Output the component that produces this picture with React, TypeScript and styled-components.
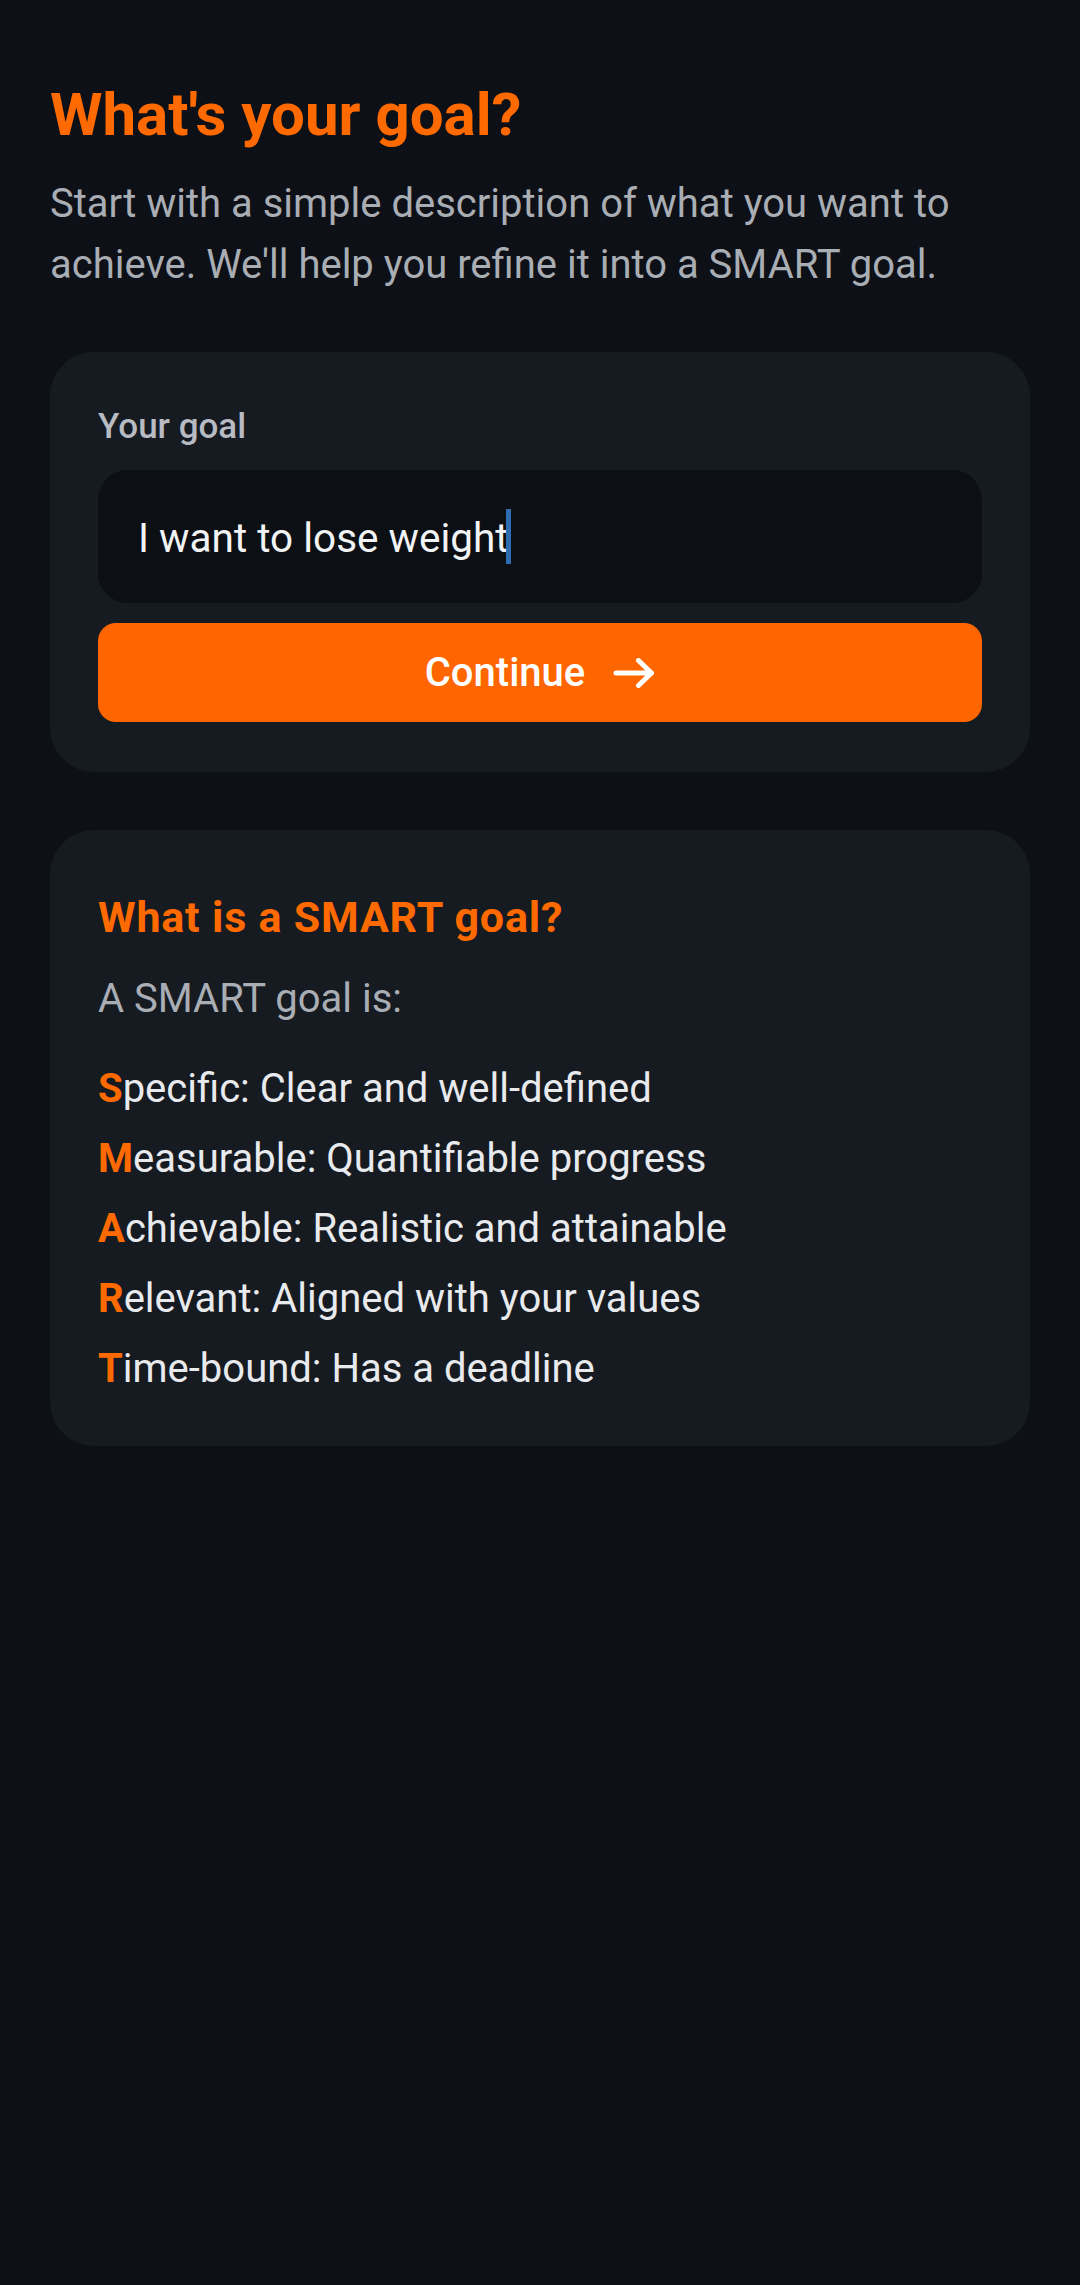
import React from "react";
import styled, { createGlobalStyle } from "styled-components";

const ORANGE = "#ff6600";

const GlobalStyle = createGlobalStyle`
  html, body {
    margin: 0;
    padding: 0;
    background: #0d1016;
  }
  body {
    font-family: Roboto, "Noto Sans", "Liberation Sans", sans-serif;
    -webkit-font-smoothing: antialiased;
  }
  * {
    box-sizing: border-box;
  }
`;

const Page = styled.main`
  min-height: 2285px;
  background: #0d1016;
  padding: 78px 50px 0;
  display: flex;
  flex-direction: column;
`;

const Title = styled.h1`
  margin: 0;
  font-size: 60px;
  line-height: 74px;
  font-weight: 700;
  color: #ff6a00;
`;

const Subtitle = styled.p`
  margin: 21px 0 0;
  font-size: 40px;
  line-height: 61px;
  color: #a9adb4;
`;

const Card = styled.section<{ $top: number; $bottom: number }>`
  margin-top: ${({ $top }) => $top}px;
  background: #161a21;
  border-radius: 44px;
  padding: 48px 48px ${({ $bottom }) => $bottom}px;
  display: flex;
  flex-direction: column;
`;

const Label = styled.label`
  font-size: 35px;
  line-height: 54px;
  font-weight: 500;
  color: #b8bbc1;
`;

const InputBox = styled.div`
  margin-top: 16px;
  height: 133px;
  border-radius: 30px;
  background: #0c0f14;
  padding: 0 40px;
  display: flex;
  align-items: center;
`;

const InputText = styled.span`
  font-size: 40.5px;
  line-height: 50px;
  color: #f2f3f5;
`;

const Caret = styled.span`
  display: inline-block;
  width: 5px;
  height: 55px;
  margin-left: -3px;
  background: #2f6db3;
  vertical-align: -12px;
`;

const Button = styled.button`
  margin-top: 20px;
  height: 99px;
  border: none;
  border-radius: 18px;
  background: ${ORANGE};
  color: #ffffff;
  font-family: inherit;
  font-size: 40px;
  font-weight: 500;
  display: flex;
  align-items: center;
  justify-content: center;
  gap: 28px;
  padding: 0;
`;

const ArrowIcon = () => (
  <svg width="42" height="30" viewBox="0 0 42 30" fill="none">
    <path
      d="M3 15H38.5M25.5 2.5L38.5 15L25.5 27.5"
      stroke="#ffffff"
      strokeWidth="5"
      strokeLinecap="round"
      strokeLinejoin="round"
    />
  </svg>
);

const InfoHeading = styled.h2`
  margin: 14px 0 0;
  font-size: 43px;
  line-height: 50px;
  font-weight: 700;
  letter-spacing: 0.8px;
  color: #ff6a00;
`;

const Intro = styled.p`
  margin: 33px 0 0;
  font-size: 40px;
  line-height: 48px;
  color: #a9adb4;
`;

const List = styled.ul`
  list-style: none;
  margin: 31px 0 0;
  padding: 0;
`;

const Item = styled.li`
  font-size: 40px;
  line-height: 70px;
  color: #e8eaed;
`;

const Letter = styled.span`
  color: #ff6a00;
  font-weight: 700;
`;

const smart = [
  ["S", "pecific: Clear and well-defined"],
  ["M", "easurable: Quantifiable progress"],
  ["A", "chievable: Realistic and attainable"],
  ["R", "elevant: Aligned with your values"],
  ["T", "ime-bound: Has a deadline"],
];

export default function App() {
  return (
    <>
      <GlobalStyle />
      <Page>
        <Title>What's your goal?</Title>
        <Subtitle>
          Start with a simple description of what you want to achieve. We'll help you refine it
          into a SMART goal.
        </Subtitle>

        <Card $top={57} $bottom={50}>
          <Label>Your goal</Label>
          <InputBox>
            <InputText>
              I want to lose weight
              <Caret />
            </InputText>
          </InputBox>
          <Button>
            Continue
            <ArrowIcon />
          </Button>
        </Card>

        <Card $top={58} $bottom={42}>
          <InfoHeading>What is a SMART goal?</InfoHeading>
          <Intro>A SMART goal is:</Intro>
          <List>
            {smart.map(([letter, rest]) => (
              <Item key={letter}>
                <Letter>{letter}</Letter>
                {rest}
              </Item>
            ))}
          </List>
        </Card>
      </Page>
    </>
  );
}
